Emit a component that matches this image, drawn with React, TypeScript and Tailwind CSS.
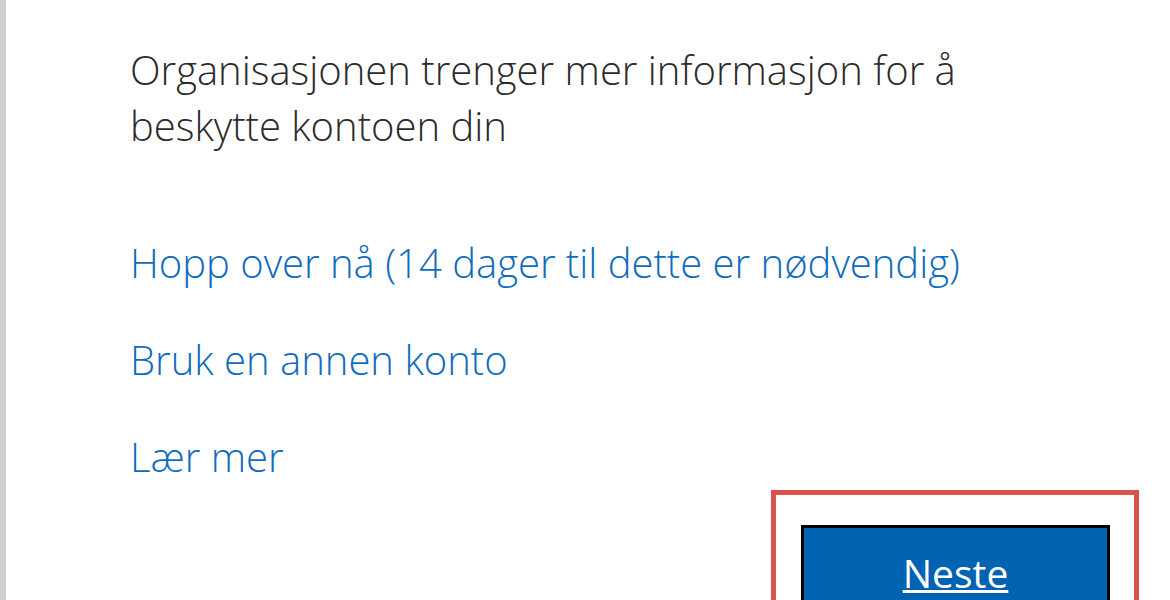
export default function App() {
  return (
    <div
      className="relative h-[600px] w-[1170px] overflow-hidden bg-white"
      style={{ fontFamily: "'Open Sans', 'Noto Sans', sans-serif" }}
    >
      <div className="flex h-full">
        <div className="w-[6px] shrink-0 bg-[#cfcfcf]" />
        <div className="flex-1 pl-[124px] pt-[42px]">
          <p className="w-[860px] text-[40px] font-[350] leading-[56px] text-[#2b2b2b]">
            Organisasjonen trenger mer informasjon for å beskytte kontoen din
          </p>
          <div className="mt-[81px] flex flex-col gap-[41px] text-[40px] font-[350] leading-[56px] text-[#0f6cbd]">
            <a>Hopp over nå (14 dager til dette er nødvendig)</a>
            <a>Bruk en annen konto</a>
            <a>Lær mer</a>
          </div>
        </div>
      </div>
      {/* highlighted button */}
      <div className="absolute left-[771px] top-[490px] h-[140px] w-[368px] border-[5px] border-[#d9534f] pl-[25px] pt-[30px]">
        <div className="flex h-[100px] w-[309px] justify-center border-[3px] border-black bg-[#0063b1] pt-[16px] text-[39px] text-white underline">
          Neste
        </div>
      </div>
    </div>
  );
}
